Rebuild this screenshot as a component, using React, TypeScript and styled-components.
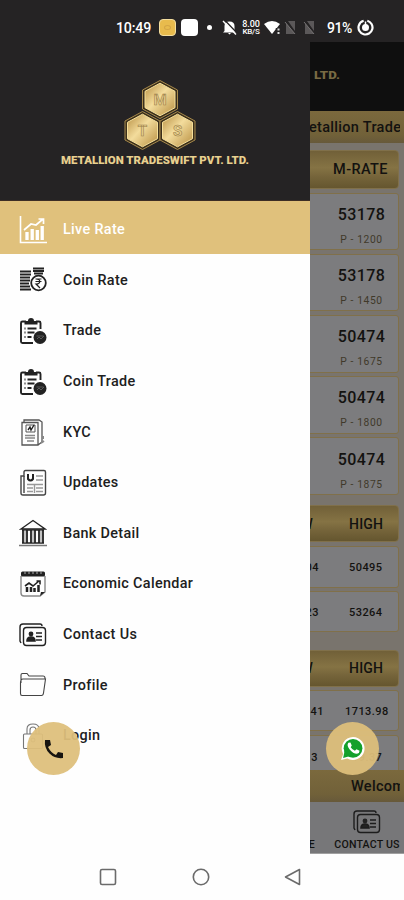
import React from "react";
import styled, { createGlobalStyle } from "styled-components";

const Global = createGlobalStyle`
  *{box-sizing:border-box}
  body{margin:0;background:#fefefe;font-family:Roboto,"Liberation Sans",sans-serif;color:#111}
  svg{display:block;flex:none}
`;

const Screen = styled.div`
  width:404px;height:900px;display:flex;flex-direction:column;position:relative;overflow:hidden;background:#fefefe;
`;
const StatusBar = styled.header`
  height:42px;background:#252324;color:#fff;display:flex;align-items:center;padding:13px 0 0 116px;
  font-size:14.2px;font-weight:500;
`;
const Time = styled.span`width:43px;letter-spacing:-.2px;white-space:nowrap;`;
const AppTile = styled.span<{ $gold?: boolean }>`
  width:17px;height:17px;border-radius:4px;margin-right:5px;
  background:${p => (p.$gold ? "#e8bb4d" : "#fff")};
  border:${p => (p.$gold ? "1px solid #f3dd9f" : "0")};
  display:grid;place-items:center;
`;
const TileMark = styled.i`width:7px;height:5px;border-radius:50%;border:1px solid #d3a545;`;
const Dot = styled.span`width:5px;height:5px;border-radius:50%;background:#fff;margin:0 10px 0 4px;`;
const Speed = styled.span`
  width:20px;margin:0 3px 0 4px;font-size:9px;line-height:8px;font-weight:500;letter-spacing:-.1px;
  display:flex;flex-direction:column;align-items:center;
`;
const SpeedUnit = styled.span`font-size:8px;line-height:7px;letter-spacing:-.3px;`;
const Battery = styled.span`margin:0 4px 0 10px;width:26px;font-size:14px;letter-spacing:-.4px;`;

const Main = styled.div`display:flex;height:812px;`;
const Drawer = styled.aside`width:310px;height:812px;background:#fefefe;flex:none;`;
const Brand = styled.div`
  height:159px;background:#252324;display:flex;flex-direction:column;align-items:center;padding-top:37px;
  border-bottom:1px solid #3c2d25;
`;
const Menu = styled.nav`display:flex;flex-direction:column;`;
const Item = styled.a<{ $active?: boolean }>`
  height:${p => (p.$active ? "52.5px" : "50.6px")};
  margin-bottom:${p => (p.$active ? "1.6px" : "0")};
  padding:${p => (p.$active ? "5px 0 0 19px" : "0 0 0 19px")};
  background:${p => (p.$active ? "#e0c17c" : "transparent")};
  color:${p => (p.$active ? "#fff" : "#202020")};
  display:flex;align-items:center;gap:16px;
  font-size:14.4px;font-weight:500;letter-spacing:.33px;
`;

const Pane = styled.section`
  width:94px;height:812px;overflow:hidden;background:#79746d;display:flex;flex-direction:column;color:#131210;
`;
const PaneTop = styled.div`height:69px;background:#0f0f0f;padding:27px 0 0 4px;flex:none;`;
const Marquee = styled.div`
  height:32px;flex:none;background:linear-gradient(#7b693d,#716139 75%,#67593a);
  padding-right:4px;
  font-size:14.5px;line-height:34px;letter-spacing:.3px;font-weight:500;
`;
const Clip = styled.div<{ $left: number }>`
  overflow:hidden;white-space:nowrap;padding-left:${p => p.$left}px;height:32px;
`;
const Lead = styled.span`margin-left:-14px;`;
const Rates = styled.div`height:627px;overflow:hidden;flex:none;padding:7px 5px 0 0;`;
const Group = styled.div<{ $gap: number }>`display:flex;flex-direction:column;margin-bottom:${p => p.$gap}px;`;
const Heading = styled.div<{ $h: number }>`
  height:${p => p.$h}px;margin-left:-8px;padding-left:8px;border:1px solid #80704a;border-radius:4px;
  background:linear-gradient(#716038,#857344 45%,#75643a 70%,#65562f);
  display:flex;align-items:center;font-size:14px;font-weight:500;letter-spacing:.2px;
  margin-bottom:3.5px;
`;
const Card = styled.div<{ $h: number }>`
  height:${p => p.$h}px;margin:0 0 3.5px -8px;padding-left:8px;border:1px solid #80704a;border-radius:3px;background:#7c7c7e;
  display:flex;align-items:center;flex:none;
`;
const HeadCell = styled.span`
  width:88px;padding-left:12px;text-align:center;font-size:14.5px;letter-spacing:.4px;
`;
const RateCell = styled.div`
  width:88px;padding:9px 0 0 14px;display:flex;flex-direction:column;align-items:center;gap:11px;
`;
const Price = styled.b`font-size:16px;line-height:17px;font-weight:500;letter-spacing:.4px;`;
const Premium = styled.span`font-size:10.3px;line-height:12px;letter-spacing:.6px;color:#40392a;`;
const LowCell = styled.span<{ $w: number }>`
  width:${p => p.$w}px;display:flex;justify-content:flex-end;white-space:nowrap;flex:none;
`;
const HighCell = styled.span<{ $left: number }>`flex:1;padding-left:${p => p.$left}px;white-space:nowrap;`;
const Values = styled(Card)`font-size:11px;font-weight:500;letter-spacing:.45px;padding-top:2px;`;
const Tabs = styled.div`
  height:52px;flex:none;background:#777779;display:flex;font-size:10.6px;line-height:12px;font-weight:500;letter-spacing:.2px;
  padding-top:6px;border-bottom:1px solid #a0a0a0;
`;
const Tab = styled.div`
  width:84px;margin-left:7px;padding-left:6px;display:flex;flex-direction:column;align-items:center;gap:3px;
  white-space:nowrap;margin-right:-7px;
`;
const PrevTab = styled.div`width:5px;display:flex;justify-content:flex-end;padding-top:31px;`;
const Fab = styled.button<{ $x: number; $y: number }>`
  position:absolute;left:${p => p.$x}px;top:${p => p.$y}px;width:53px;height:53px;border-radius:50%;border:0;padding:0;
  background:rgba(222,191,123,.94);display:grid;place-items:center;
`;
const NavBar = styled.footer`
  height:46px;background:#fefefe;display:flex;align-items:center;padding:0 102px 0 99px;justify-content:space-between;
`;

const Ico = ({ children, c = "#222" }: { children: React.ReactNode; c?: string }) => (
  <svg width="28" height="28" viewBox="0 0 28 28" fill="none" stroke={c} strokeWidth="1.4">{children}</svg>
);

const Chart = () => (
  <Ico c="#fff">
    <path d="M1.500 0v26.500H28" strokeWidth="1.6" />
    <path d="M5 14l7-6 5 1 7-6M19.500 3h5v5" strokeWidth="1.7" />
    <path d="M8 24v-8M13.200 24v-11M18.300 24v-10M23.200 24v-14" strokeWidth="3.3" />
  </Ico>
);
const Coins = () => (
  <Ico>
    <path d="M1 5.500h11M1 8.500h11M1 11.500h10M1 14.500h10M1 17.500h9M1 20.500h10M1 23.500h11M14 2.500h11M14 5h11M15 7.500h9" strokeWidth="2.1" />
    <circle cx="19.500" cy="17" r="7.300" fill="#fefefe" strokeWidth="1.8" />
    <path d="M16.500 13h6M16.500 15.500h6M17 13c5 0 5 5 0 5l4 4" strokeWidth="1.2" />
  </Ico>
);
const Clipboard = () => (
  <Ico>
    <path d="M7 4.500H3.500Q2 4.500 2 6v18.500q0 1.500 1.500 1.500H14M17 4.500h3q1.500 0 1.500 1.500v6" strokeWidth="1.9" />
    <path d="M5.500 7.500h13V4H15a3 3 0 0 0-6 0H5.500z" fill="#222" stroke="none" />
    <path d="M5.500 11.500h1M8.500 11.500h9M5.500 15.500h1M8.500 15.500h7M5.500 20h1M8.500 20h4" strokeWidth="1.8" />
    <circle cx="21" cy="20.500" r="6.500" fill="#222" stroke="none" />
    <path d="M17.500 19h7M18 22l2-2 2 2 3-3" stroke="#666" strokeWidth=".8" />
  </Ico>
);
const Kyc = () => (
  <Ico c="#555">
    <path d="M3 4.500h16V27H3zM5 4.500V2h15l3 2v20l-4 3" strokeWidth="1.300" />
    <path d="M7 7h9v7H7z" strokeWidth="1" /><path d="M9 12l2-3 1 3 3-5" stroke="#222" />
    <path d="M6 17.500h10M6 20h10M8 23h7" strokeWidth="1.5" stroke="#888" /><path d="M24 18v3M22 25l3-2" strokeWidth="2" stroke="#888" />
  </Ico>
);
const News = () => (
  <Ico c="#444">
    <path d="M5 3q0-1.500 1.500-1.500H25q1.500 0 1.500 1.500v21q0 2-2 2H4q-2 0-2-2V7h3z" />
    <path d="M5 7v17" /><path d="M9 5v5q2.500 3 5 0V5" stroke="#222" strokeWidth="2" />
    <path d="M17 7h7M17 11h7M8 15.500h16M8 19h6M17 19h7M8 22.500h6M17 22.500h7M15.500 15v9" stroke="#999" />
  </Ico>
);
const Bank = () => (
  <Ico>
    <path d="M2 10L14 1.500 26 10z" strokeWidth="1.3" /><path d="M0 26.500h28" stroke="#777" strokeWidth="1.500" />
    <path d="M3 11h22M3 24h22" strokeWidth="1.5" />
    <path d="M4 11v13M8 11v13M12 11v13M16 11v13M20 11v13M24 11v13" strokeWidth="1.8" />
    <path d="M6 11v13M14 11v13M22 11v13" stroke="#888" strokeWidth="1" />
  </Ico>
);
const Calendar = () => (
  <Ico>
    <path d="M2 6v17q0 3 3 3h16l5-4V6" stroke="#888" />
    <rect x="2" y="1.500" width="24" height="5" rx="1.500" fill="#222" stroke="none" />
    <path d="M6 1v3M10 1v3M14 1v3M18 1v3M22 1v3" stroke="#aaa" strokeWidth="1" />
    <path d="M6 16l4-3 4 3 6-5M17.500 11H21v3.500" strokeWidth="1.6" />
    <path d="M8 22v-5M12 22v-5M15.500 22v-4M19.500 22v-7" strokeWidth="2.500" />
    <path d="M21 26l1-4h4z" fill="#222" stroke="none" />
  </Ico>
);
const Contact = ({ dim }: { dim?: boolean }) => (
  <Ico c={dim ? "#1d1d1d" : "#222"}>
    <path d="M2 22l-1-2V6q0-3 3-3h17q2 0 2 2" />
    <rect x="4.500" y="6.500" width="22" height="18" rx="3" />
    <circle cx="12" cy="13" r="2.400" fill="#222" stroke="none" />
    <path d="M8 20q0-4 4-4t4 4zM17 12h6M17 15.500h6M17 19h6" fill="#222" strokeWidth="1.600" />
  </Ico>
);
const Folder = () => (
  <Ico c="#444">
    <path d="M2 12V4q0-1.500 1.500-1.500H8L10 5h14q2 0 2 2v1M4 8h22.500L24.500 22q-.3 2.500-2 2.500H3q-1.500 0-1.500-2V12q0-4 2.500-4z" strokeWidth="1.100" />
  </Ico>
);
const Lock = () => (
  <Ico c="#777">
    <path d="M8 12V7q0-5 6-5t6 5v5M11 12V8q0-3 3-3t3 3v4" strokeWidth="1.100" />
    <rect x="4.500" y="12" width="19" height="14.500" rx="1" strokeWidth="1.100" />
    <circle cx="14" cy="18" r="2" strokeWidth="1" />
  </Ico>
);

const items: [string, React.FC][] = [
  ["Live Rate", Chart], ["Coin Rate", Coins], ["Trade", Clipboard], ["Coin Trade", Clipboard], ["KYC", Kyc],
  ["Updates", News], ["Bank Detail", Bank], ["Economic Calendar", Calendar], ["Contact Us", Contact],
  ["Profile", Folder], ["Login", Lock],
];
const rates = [["53178", "1200"], ["53178", "1450"], ["50474", "1675"], ["50474", "1800"], ["50474", "1875"]];

const Hexagon = ({ x, y, t }: { x: number; y: number; t: string }) => (
  <g transform={`translate(${x} ${y})`}>
    <path d="M0-19L17.500-9.500V9.500L0 19-17.500 9.500V-9.500z" fill="#3b2f1b" stroke="#a78a4c" strokeWidth="1" />
    <path d="M0-16.300L15-8.200V8.200L0 16.300-15 8.200V-8.200z" fill="url(#gold)" stroke="#f5df9a" strokeWidth="1" />
    <text y="5.500" textAnchor="middle" fontFamily="Roboto" fontWeight="700" fontSize="15" fill="#e8cf8e" stroke="#9a8048" strokeWidth=".6">{t}</text>
  </g>
);
const Logo = () => (
  <svg width="190" height="88" viewBox="0 0 190 88">
    <defs>
      <linearGradient id="gold" x1="0" y1="0" x2="1" y2="1">
        <stop stopColor="#b78f43" /><stop offset=".45" stopColor="#f3dc9c" /><stop offset="1" stopColor="#b88f42" />
      </linearGradient>
    </defs>
    <Hexagon x={100} y={20.500} t="M" />
    <Hexagon x={82.500} y={51.500} t="T" />
    <Hexagon x={117.500} y={51.500} t="S" />
    <text x="1" y="84.500" textLength="188" lengthAdjust="spacingAndGlyphs" fontFamily="Roboto" fontWeight="900" fontSize="10" fill="#e8d08f">METALLION TRADESWIFT PVT. LTD.</text>
  </svg>
);

export default function App() {
  return (
    <>
      <Global />
      <Screen>
        <StatusBar>
          <Time>10:49</Time>
          <AppTile $gold><TileMark /></AppTile>
          <AppTile />
          <Dot />
          <svg width="15" height="15" viewBox="0 0 15 15"><path d="M2.500 11V6q0-4.500 5-4.500t5 4.500v5l1.500 1.500H1zM6 13h3l-1.500 1.500z" fill="#fff" /><path d="M3.500 1l12 12.500" stroke="#252324" strokeWidth="1.300" /><path d="M1 1l13 13.500" stroke="#fff" strokeWidth="1.400" /></svg>
          <Speed><span>8.00</span><SpeedUnit>KB/S</SpeedUnit></Speed>
          <svg width="18" height="14" viewBox="0 0 18 14"><path d="M0 3q8-6 16 0L8 13z" fill="#fff" /><path d="M13 7v6M16 8v5" stroke="#252324" strokeWidth="2.500" /><path d="M14.500 7.500v2M14.500 11v2" stroke="#ddd" strokeWidth="2" /></svg>
          <svg width="35" height="13" viewBox="0 0 35 13"><g fill="#5b5859"><path d="M6 0h7v10zM4 2l9 11H4z" /><path d="M25 0h7v10zM23 2l9 11h-9z" /></g><path d="M3 1l10 12M22 1l10 12" stroke="#767374" /></svg>
          <Battery>91%</Battery>
          <svg width="17" height="17" viewBox="0 0 17 17" fill="none"><circle cx="8.500" cy="8.500" r="7" stroke="#fff" strokeWidth="2.200" strokeDasharray="40 4" transform="rotate(-75 8.500 8.500)" /><circle cx="8.500" cy="8.500" r="3.500" fill="#fff" /><path d="M8.500 2.500v4" stroke="#fff" strokeWidth="1.500" /></svg>
        </StatusBar>
        <Main>
          <Drawer>
            <Brand><Logo /></Brand>
            <Menu>
              {items.map(([label, Icon], i) => (
                <Item key={label} $active={i === 0}><Icon />{label}</Item>
              ))}
            </Menu>
          </Drawer>
          <Pane>
            <PaneTop>
              <svg width="28" height="12" viewBox="0 0 28 12"><text x="0" y="9.500" textLength="26" lengthAdjust="spacingAndGlyphs" fontFamily="Roboto" fontWeight="900" fontSize="10" fill="#786a43">LTD.</text></svg>
            </PaneTop>
            <Marquee><Clip $left={0}><Lead>Metallion Tradeswift</Lead></Clip></Marquee>
            <Rates>
              <Group $gap={6.500}>
                <Heading $h={39}><HeadCell>M-RATE</HeadCell></Heading>
                {rates.map(([price, premium]) => (
                  <Card $h={57.700} key={premium}>
                    <RateCell><Price>{price}</Price><Premium>P - {premium}</Premium></RateCell>
                  </Card>
                ))}
              </Group>
              <Group $gap={14}>
                <Heading $h={37.500}><LowCell $w={2}>LOW</LowCell><HighCell $left={36}>HIGH</HighCell></Heading>
                <Values $h={42}><LowCell $w={8}>50404</LowCell><HighCell $left={30}>50495</HighCell></Values>
                <Values $h={41}><LowCell $w={8}>53123</LowCell><HighCell $left={30}>53264</HighCell></Values>
              </Group>
              <Group $gap={0}>
                <Heading $h={37}><LowCell $w={2}>LOW</LowCell><HighCell $left={36}>HIGH</HighCell></Heading>
                <Values $h={41}><LowCell $w={13}>1701.41</LowCell><HighCell $left={21}>1713.98</HighCell></Values>
                <Values $h={44}><LowCell $w={7}>19.13</LowCell><HighCell $left={34}>19.37</HighCell></Values>
              </Group>
            </Rates>
            <Marquee><Clip $left={41}>Welcome</Clip></Marquee>
            <Tabs>
              <PrevTab>E</PrevTab>
              <Tab><Contact dim />CONTACT US</Tab>
            </Tabs>
          </Pane>
        </Main>
        <NavBar>
          <svg width="18" height="18" viewBox="0 0 18 18"><rect x="1.500" y="1.500" width="15" height="15" rx="1.500" fill="none" stroke="#6b6b6b" strokeWidth="1.600" /></svg>
          <svg width="18" height="18" viewBox="0 0 18 18"><circle cx="9" cy="9" r="7.700" fill="none" stroke="#6b6b6b" strokeWidth="1.600" /></svg>
          <svg width="18" height="18" viewBox="0 0 18 18"><path d="M15.500 1.500v15L1.500 9z" fill="none" stroke="#6b6b6b" strokeWidth="1.600" strokeLinejoin="round" /></svg>
        </NavBar>
        <Fab $x={27} $y={722}>
          <svg width="20" height="20" viewBox="0 0 20 20"><path d="M1 1h5l1 5-3 2q3 6 8 8l2-3 5 1v5Q11 20 5.500 14.500T1 1z" fill="#171410" /></svg>
        </Fab>
        <Fab $x={326} $y={722}>
          <svg width="25" height="25" viewBox="0 0 24 24"><path d="M12.500 1A11 11 0 0 0 3 17.300L1 23l6-1.500A11 11 0 1 0 12.500 1z" fill="#fff" /><circle cx="12.500" cy="11.800" r="9" fill="#14a02b" /><path d="M4.500 14L3 21l6-1.500z" fill="#14a02b" /><path d="M8 6.500l2-.3 1.300 3-1 1.500q1.400 2.400 4 3.400l1.500-1.500 3 1.500q0 2.500-2.500 3Q12.500 17 9.300 13T8 6.500z" fill="#fff" /></svg>
        </Fab>
      </Screen>
    </>
  );
}
